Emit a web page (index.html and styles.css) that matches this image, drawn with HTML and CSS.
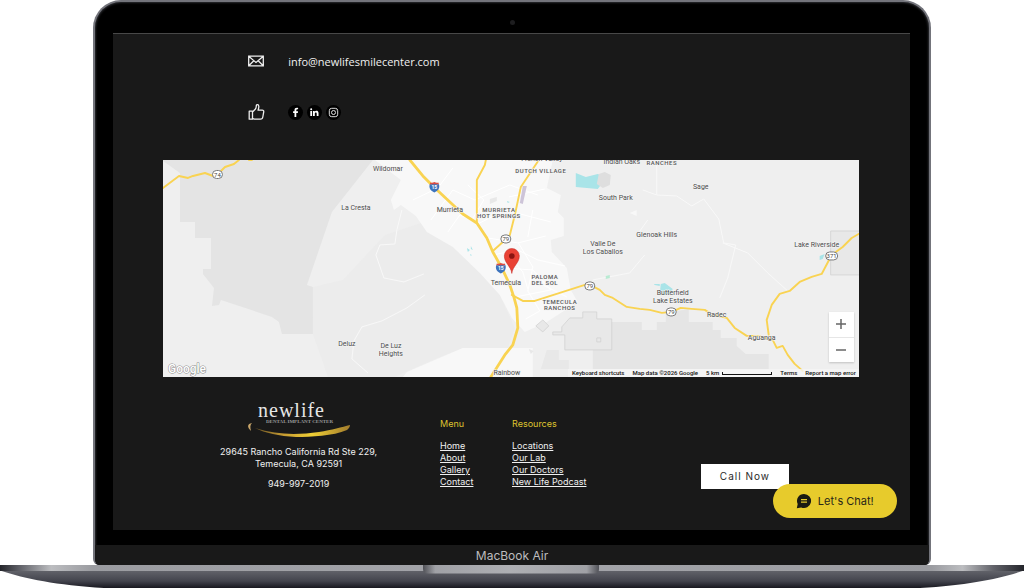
FILE: index.html
```html
<!DOCTYPE html>
<html lang="en">
<head>
<meta charset="utf-8">
<meta name="viewport" content="width=device-width, initial-scale=1">
<title>New Life Dental Implant Center</title>
<link rel="stylesheet" href="styles.css">
</head>
<body>
<div class="laptop">
  <div class="lid">
    <div class="camera-bar"><span class="camera"></span></div>
    <main class="screen">
      <section class="contact">
        <div class="contact-row">
          <svg class="contact-icon" viewBox="0 0 18 18" fill="none" stroke="#eee" stroke-width="1.3"><path d="M1.7 4.2h14.6v9.600H1.700zM2 4.500l7 6 7-6M2 13.500l4.800-4.800M16 13.500l-4.800-4.800"/></svg>
          <a class="email" href="mailto:info@newlifesmilecenter.com">info@newlifesmilecenter.com</a>
        </div>
        <div class="contact-row">
          <svg class="contact-icon" viewBox="0 0 18 18" fill="none" stroke="#eee" stroke-width="1.300" stroke-linejoin="round"><path d="M2.200 8.200h3.300v8H2.200zM5.500 9l2.700-2.800c1.200-1.300 1-2.200 1.100-3.600.1-1.300 2.300-1.300 2.500.6.2 1.600-.3 2.700-.8 4h4.200c1.200 0 1.700.8 1.500 1.800l-.9 5c-.2 1.400-1 2.200-2.300 2.200H8c-1 0-1.700-.7-2.500-.7"/></svg>
          <div class="social">
            <a href="#" aria-label="Facebook"><svg viewBox="0 0 15 15"><path fill="#fff" d="M8.300 12V8h1.500l.3-1.700H8.300V5.200c0-.6.300-.9.900-.9h.9V2.900C8 2.500 6.500 3 6.500 5v1.300H5.100V8h1.400v4z"/></svg></a>
            <a href="#" aria-label="LinkedIn"><svg viewBox="0 0 15 15"><path fill="#fff" d="M3.300 6h1.800v5H3.300zM6 6h1.700v.7c.8-1.300 3.800-1.300 3.800 1.300v3H9.700V8.400c0-1.400-1.900-1.300-1.900 0V11H6z"/><circle cx="4.200" cy="4.300" r="1" fill="#fff"/></svg></a>
            <a href="#" aria-label="Instagram"><svg viewBox="0 0 15 15" fill="none" stroke="#ddd"><rect x="3.300" y="3.300" width="8.400" height="8.400" rx="2.400"/><circle cx="7.500" cy="7.500" r="2"/><circle cx="10" cy="5" r=".4" fill="#ddd" stroke="none"/></svg></a>
          </div>
        </div>
      </section>

      <section class="map" aria-label="Map of Temecula">
        <svg class="map-canvas" viewBox="0 0 696 217">
          <rect width="696" height="217" fill="#efefef"/>
          <path fill="#e4e4e4" d="M0 1 17 13V62H32V78H48V109H40V114L51 128 49 146 56 145 58 140 109 157 116 162 119 174H150V127L144 125 169 52 210 0H0z"/>
          <path fill="#ececec" d="M222 75 258 63 317 105 337 135 352 168 345 188H300L270 200 232 217H165L150 174V127L180 120z"/>
          <path fill="#f8f8f8" d="M212 0H390L384 28 398 35 395 52 401 58V76L388 80 389 92 404 108 408 130 415 142 384 162 362 172 349 158 337 135 317 113 290 87 264 72 253 56 238 45 231 50 228 40 238 20zM244 212 300 188H370V217H240zM467 53l7-3v6z"/>
          <path fill="#e5e5e5" d="M430 162H479V170H494V162H503V153L526 149V162H550V170H558V178H574V186L583 194H606V209H430z"/>
          <path fill="#e8e8e8" stroke="#cfcfcf" stroke-width=".7" d="M420 152H434V159H449V190H402V175H390V172H399V167L407 158H420zM434 178h4v4h-4zM373 166l7-6 6 6-6 6zM668 71h30v44h-30z"/>
          <path fill="#e8e8e8" d="M327 39l7-2v4l-7 3zM384 190h12v10h10v9h-28zM366 189l5 2-3 3z"/>
          <g fill="none" stroke="#f8f8f8" stroke-width="1">
            <path d="M239 50l-5 20-2 14-15 1-4 10 8 23 20 4 20-8M262 135l-18 13-25 13-20 6-8 14-2 18 16 14M494 0v35l-14-5M494 35l20 1 15 10 12-7 15 20 5 24 12 2-8 33-8 20M560 83l25 10 20 20 20 18M485 60l-10 14M430 120l37-7 15-18"/>
          </g>
          <g fill="none" stroke="#fff" stroke-width="1">
            <path d="M250 40l25-12 15-20M268 60l22-30 22 10 35-15 28 10M285 72l12-17 20 8 25-13 46 12M325 78l30 5 28-7M330 95l25-5 20 10 27 6M340 108l30 2 18 20-35 7M355 82l15 25-5 24 12 20-14 8M346 37l36-8M380 125l24 12M370 50l-5 27M305 25l16 15-12 20M345 95l15 17 5 17"/>
          </g>
          <path fill="#a9e4e8" d="M413 13l10 4 12-3 8 3-5 8-3 4-22-2zM498 124l4-1 8 6-3 6-10-1zM491 124h6v2l-5-1zM657 96l5-2-2 5-3 1zM304 88l3 2-2 2zM308 86l2 4-2-1zM307 94l2 1-1 1zM344 41l3 1-2 1z"/>
          <path fill="#dedede" d="M436 14l6-2 6 3-1 10-7 3-6-4z"/><path fill="#b8ead2" d="M443 116l4-1v3l-4 1z"/><path fill="#cdc4d8" d="M360 26h4l-4 18-3-1z"/>
          <g fill="none" stroke="#f9d352" stroke-linejoin="round" stroke-linecap="round">
            <path stroke-width="1.900" d="M0 28 4 25 16 16 25 18 30 16 42 13 50 16 54 15 62 7 71 4 76 0M86 0h3M323 0 322 5 314 20V63M376 0 358 27 352 55 347 75 340 82 330 91M349 135 360 141H372L422 125 429 126 437 130 442 135 450 138 464 147 477 149 487 150 499 153 509 152 518 148 529 149 542 150 550 155 564 158 572 168 584 176 595 176 610 180 614 188 620 186 625 195 632 204 640 211M696 74 689 78 680 87 669 95 659 114 649 117 637 122 627 131 617 134 609 145 604 160 606 175"/>
            <path stroke-width="2.800" d="M247 0 260 16 271 27 287 42 300 54 314 63 324 78 330 92 339 108 347 125 351 137 354 148 355 168 350 185 342 195 328 217"/>
          </g>
          <g class="shield">
            <rect x="49.500" y="10.500" width="10" height="8" rx="4"/><text x="54.500" y="16.600">74</text>
            <rect x="338" y="75" width="10" height="8" rx="4"/><text x="343" y="81.100">79</text>
            <rect x="422" y="122" width="10" height="8" rx="4"/><text x="427" y="128.100">79</text>
            <rect x="503.500" y="148" width="10" height="8" rx="4"/><text x="508.500" y="154.100">79</text>
            <rect x="663" y="92" width="12" height="8" rx="4"/><text x="669" y="98.100">371</text>
          </g>
          <g class="interstate">
            <path fill="#3c73bd" d="M267 24c1.500.5 3 0 4.500-.8 1.500.8 3 1.300 4.500.8 1.500 4-1 7-4.500 8.500-3.500-1.500-6-4.500-4.500-8.500z"/><path fill="#db4c43" d="M267.500 22.500c1.500.5 2.500.3 4-.5 1.500.8 2.500 1 4 .5l.6 1.800h-9.200z"/><text x="271.500" y="29.500">15</text>
            <path fill="#3c73bd" d="M333.500 105c1.500.5 3 0 4.500-.8 1.500.8 3 1.300 4.500.8 1.500 4-1 7-4.500 8.500-3.500-1.500-6-4.500-4.500-8.500z"/><path fill="#db4c43" d="M334 103.500c1.500.5 2.500.3 4-.5 1.500.8 2.500 1 4 .5l.6 1.800h-9.200z"/><text x="338" y="110.500">15</text>
          </g>
          <g class="place">
            <text x="225" y="11">Wildomar</text><text x="193" y="50">La Cresta</text><text x="287" y="52">Murrieta</text><text x="343" y="125">Temecula</text>
            <text x="453" y="40">South Park</text><text x="538" y="29">Sage</text><text x="494" y="77">Glenoak Hills</text>
            <text x="440" y="86">Valle De</text><text x="440" y="94">Los Caballos</text><text x="654" y="87">Lake Riverside</text>
            <text x="510" y="135">Butterfield</text><text x="510" y="143">Lake Estates</text><text x="554" y="157">Radec</text><text x="599" y="180">Aguanga</text>
            <text x="184" y="186">Deluz</text><text x="228" y="188">De Luz</text><text x="228" y="196">Heights</text><text x="344" y="215">Rainbow</text>
            <text x="379" y="1">French Valley</text><text x="459" y="4">Indian Oaks</text>
          </g>
          <g class="district">
            <text x="378" y="13">DUTCH VILLAGE</text><text x="336" y="52">MURRIETA</text><text x="336" y="58">HOT SPRINGS</text>
            <text x="382" y="119">PALOMA</text><text x="382" y="125">DEL SOL</text><text x="397" y="144">TEMECULA</text><text x="397" y="150">RANCHOS</text><text x="499" y="5">RANCHES</text>
          </g>
          <path fill="#e94235" stroke="#c5221f" stroke-width=".5" d="M349 113.500c-.7-7-7.500-10.500-7.500-17.500a7.500 7.500 0 0 1 15 0c0 7-6.800 10.500-7.500 17.500z"/><circle cx="349" cy="96" r="2.800" fill="#8b1511"/>
          <text class="google" x="5" y="213">Google</text>
        </svg>
        <div class="zoom">
          <button type="button" aria-label="Zoom in"><svg viewBox="0 0 12 12"><path d="M6 1v10M1 6h10"/></svg></button>
          <button type="button" aria-label="Zoom out"><svg viewBox="0 0 12 12"><path d="M1 6h10"/></svg></button>
        </div>
        <div class="attribution">
          <a href="#">Keyboard shortcuts</a><span>Map data ©2026 Google</span><span class="scale">5 km<i></i></span><a href="#">Terms</a><a href="#">Report a map error</a>
        </div>
      </section>

      <footer class="footer">
        <div class="brand">
          <svg class="logo" viewBox="0 0 104 40">
            <defs><linearGradient id="gold"><stop stop-color="#6b5425"/><stop offset=".3" stop-color="#c79c32"/><stop offset=".6" stop-color="#efcf35"/><stop offset="1" stop-color="#a27c2c"/></linearGradient></defs>
            <text class="logo-name" x="11" y="16">newlife</text>
            <text class="logo-tag" x="19" y="22">DENTAL IMPLANT CENTER</text>
            <path fill="url(#gold)" d="M8 27c22 7 42 7 64 4 13-2 23-5 31-7 0 2-1 3-3 5-14 6-36 7-51 7-17-1-31-4-41-9z"/>
            <path fill="#c9a66a" d="M5 22c-5 1-5 4-1 8-1-4-1-6 1-8z"/>
          </svg>
          <address>29645 Rancho California Rd Ste 229,<br>Temecula, CA 92591</address>
          <a class="phone" href="tel:9499972019">949-997-2019</a>
        </div>
        <nav class="links" aria-label="Menu"><h2>Menu</h2><a href="#">Home</a><a href="#">About</a><a href="#">Gallery</a><a href="#">Contact</a></nav>
        <nav class="links" aria-label="Resources"><h2>Resources</h2><a href="#">Locations</a><a href="#">Our Lab</a><a href="#">Our Doctors</a><a href="#">New Life Podcast</a></nav>
        <div class="call"><button type="button">Call Now</button></div>
      </footer>
      <button class="chat" type="button">
        <svg viewBox="0 0 16 16"><path fill="#1a1a12" d="M8 1a7 7 0 1 1-2.800 13.400L.8 15.300l.9-4.200A7 7 0 0 1 8 1z"/><path stroke="#e7cb2c" stroke-width="1.200" d="M5 6.700h6M5 9.200h6"/></svg>
        Let's Chat!
      </button>
    </main>
    <div class="chin">MacBook Air</div>
  </div>
  <svg class="base" viewBox="0 0 1024 23" preserveAspectRatio="none">
    <defs>
      <linearGradient id="body" x2="0" y2="1"><stop stop-color="#62636a"/><stop offset=".6" stop-color="#43444d"/><stop offset="1" stop-color="#181820"/></linearGradient>
      <linearGradient id="deck"><stop stop-color="#24252b"/><stop offset=".02" stop-color="#62636a"/><stop offset=".05" stop-color="#bcbdc0"/><stop offset=".09" stop-color="#9b9ca1"/><stop offset=".5" stop-color="#a4a5aa"/><stop offset=".91" stop-color="#9b9ca1"/><stop offset=".94" stop-color="#bcbdc0"/><stop offset=".97" stop-color="#62636a"/><stop offset="1" stop-color="#24252b"/></linearGradient>
      <linearGradient id="notch"><stop stop-color="#505157"/><stop offset=".07" stop-color="#a0a1a6"/><stop offset=".5" stop-color="#aeafb3"/><stop offset=".93" stop-color="#a0a1a6"/><stop offset="1" stop-color="#505157"/></linearGradient>
    </defs>
    <path fill="url(#body)" d="M0 5.500C26 14 56 20 104 23H920c48-3 78-9 104-17.500z"/>
    <path fill="url(#deck)" d="M0 0h1024v6H0z"/>
    <path fill="url(#notch)" d="M423 0h176v4q0 4.500-5 4.500H428q-5 0-5-4.500z"/>
  </svg>
</div>
</body>
</html>
```
FILE: styles.css
```css
* { box-sizing: border-box; }

body {
  margin: 0;
  background: #fff;
  font-family: Inter, "Liberation Sans", sans-serif;
  font-size: 10px;
  color: #f0f0f0;
}

a { color: inherit; text-decoration: none; }
button { font: inherit; border: 0; cursor: pointer; }
svg { display: block; }

.laptop { display: flex; flex-direction: column; }

.lid {
  display: flex;
  flex-direction: column;
  margin: 0 9.1%;
  border: 2px solid #73747b;
  border-bottom: 0;
  border-radius: 28px 28px 6px 6px;
  background: #000;
  box-shadow: inset 0 0 2px 1px #2b2c30;
  overflow: hidden;
}

.camera-bar { display: grid; place-items: center; height: 31px; padding-top: 9px; }
.camera { width: 5px; height: 5px; border-radius: 50%; background: #1d1d1f; }

.screen {
  position: relative;
  min-height: 497px;
  margin: 0 19px 0 18px;
  border-top: 1px solid #484848;
  background: #191919;
}

.contact { display: grid; gap: 31px; padding: 17px 134px 38px; }
.contact-row { display: flex; align-items: center; gap: 23px; height: 20px; }
.contact-icon { width: 18px; height: 18px; }
.email { font-family: "Open Sans", sans-serif; font-size: 11px; }
.social { display: flex; gap: 4px; }
.social a { width: 15px; height: 15px; border-radius: 50%; background: #000; }

.map { position: relative; margin: 0 51px 0 50px; background: #efefef; }
.map-canvas { width: 100%; height: auto; font-family: Roboto, sans-serif; }
.place { font-size: 7px; fill: #4c4c4c; text-anchor: middle; stroke: #f5f5f5; stroke-width: 1px; paint-order: stroke; }
.district { font-size: 6px; font-weight: 500; fill: #555; text-anchor: middle; letter-spacing: 0.5px; stroke: #f5f5f5; stroke-width: 1px; paint-order: stroke; }
.shield rect { fill: #fff; stroke: #777; stroke-width: 1px; }
.shield text { font-size: 6px; fill: #444; text-anchor: middle; }
.interstate text { font-size: 5px; font-weight: 700; fill: #fff; text-anchor: middle; }
.google { font-size: 12px; font-weight: 500; fill: #fff; stroke: #8b8b8b; stroke-width: 1px; paint-order: stroke; }

.zoom {
  position: absolute;
  right: 5px;
  bottom: 15px;
  width: 25px;
  background: #fff;
  box-shadow: 0 1px 2px #0003;
}
.zoom button { display: grid; place-items: center; width: 100%; height: 25px; padding: 0; background: none; }
.zoom button + button { border-top: 1px solid #e6e6e6; }
.zoom svg { width: 12px; height: 12px; stroke: #666; stroke-width: 1.5; }

.attribution {
  position: absolute;
  right: 0;
  bottom: 0;
  display: flex;
  gap: 8px;
  padding: 0 3px 0 4px;
  background: #f5f5f5cc;
  color: #111;
  font: 500 6px/8px Roboto, sans-serif;
  white-space: nowrap;
}
.scale { display: flex; gap: 3px; }
.scale i { width: 50px; height: 3px; margin-top: 3px; border: 1px solid #111; border-top: 0; }

.footer {
  display: grid;
  grid-template-columns: 271fr 66fr 183fr 158fr;
  gap: 6px;
  margin: 0 51px 0 50px;
  padding: 24px 0 30px;
}
.brand { display: flex; flex-direction: column; align-items: center; text-align: center; }
.logo { width: 104px; height: 40px; }
.logo-name { font: 20px "Liberation Serif", serif; letter-spacing: 1px; fill: #e6e6e6; }
.logo-tag { font: bold 5px "Liberation Serif", serif; fill: #999; }
address { margin-top: 5px; font-style: normal; font-size: 9px; line-height: 12px; white-space: nowrap; }
.phone { margin-top: 8px; font-size: 9px; line-height: 12px; }

.links { display: flex; flex-direction: column; align-items: flex-start; padding-top: 17px; font-size: 9px; line-height: 12px; white-space: nowrap; }
.links h2 { margin: 0 0 10px; font-size: 9px; font-weight: 400; color: #dfc32f; }
.links a { text-decoration: underline; }

.call { padding-top: 63px; }
.call button { width: 88px; height: 25px; padding: 0; background: #fff; color: #292929; font-size: 10px; letter-spacing: 1px; }

.chat {
  position: absolute;
  right: 13px;
  bottom: 12px;
  display: flex;
  align-items: center;
  justify-content: center;
  gap: 6px;
  width: 124px;
  height: 34px;
  padding: 0;
  border-radius: 17px;
  background: #e7cb2c;
  color: #292718;
  font-size: 11px;
}
.chat svg { width: 16px; height: 16px; }

.chin {
  display: grid;
  place-items: center;
  height: 20px;
  margin-top: 15px;
  background: #191919;
  color: #bcbcbf;
  font-size: 12px;
}

.base { width: 100%; height: 23px; }
```
